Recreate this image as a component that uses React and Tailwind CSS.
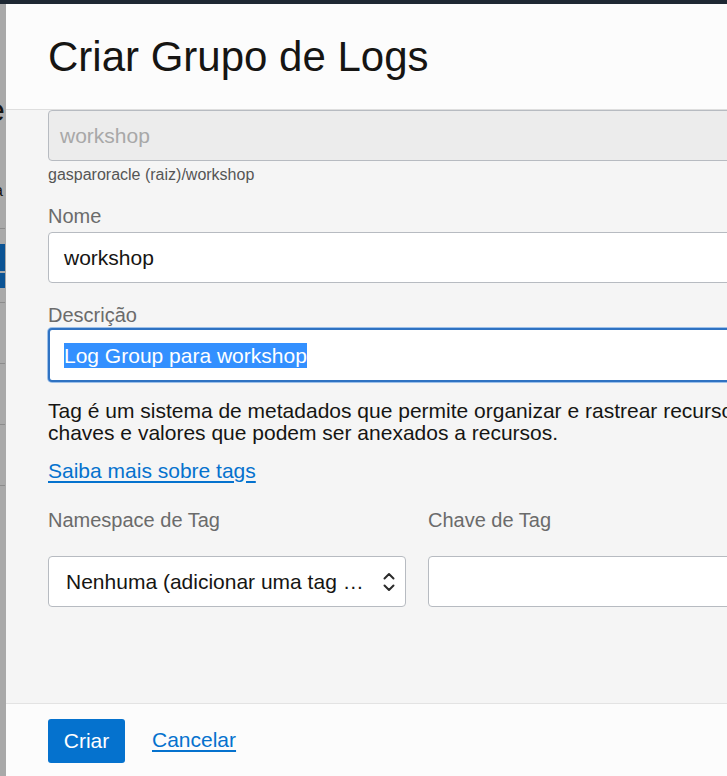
import React from 'react';

// fundo da página, escurecido pelo overlay do modal
function PageStrip() {
  return (
    <div className="w-[6px] shrink-0 bg-[#a9a9a9] overflow-hidden flex flex-col">
      <div className="h-[90px]" />
      <div className="h-[32px] -ml-[13px] text-[32px] leading-[32px] text-[#161513]">e</div>
      <div className="h-[56px]" />
      <div className="h-[18px] -ml-[6px] text-[16px] leading-[18px] text-[#161513]">a</div>
      <div className="h-[28px]" />
      <div className="h-px w-[5px] bg-[#8c8c8c]" />
      <div className="h-[15px]" />
      <div className="h-[27px] w-[5px] bg-[#0b5394]" />
      <div className="h-[2px]" />
      <div className="h-[15px] w-[5px] bg-[#0b5394]" />
      <div className="h-[14px]" />
      <div className="h-px w-[5px] bg-[#8c8c8c]" />
      <div className="h-[60px]" />
      <div className="h-px w-[5px] bg-[#8c8c8c]" />
      <div className="h-[60px]" />
      <div className="h-px w-[5px] bg-[#8c8c8c]" />
      <div className="h-[60px]" />
      <div className="h-px w-[5px] bg-[#8c8c8c]" />
    </div>
  );
}

function Chevrons() {
  return (
    <svg width="12" height="20" viewBox="0 0 12 20" fill="none" stroke="#2b2b2b" strokeWidth="2" strokeLinecap="round" strokeLinejoin="round">
      <path d="M1.5 6.5 L6 2 L10.5 6.5" />
      <path d="M1.5 13.5 L6 18 L10.5 13.5" />
    </svg>
  );
}

export default function App() {
  return (
    <div className="w-[727px] h-[776px] overflow-hidden flex flex-col font-['Liberation_Sans',Arial,sans-serif] text-[#161513]">
      <div className="h-[4px] bg-[#1e2833] shrink-0" />
      <div className="flex flex-1 min-h-0">
        <PageStrip />

        {/* --- MODAL --- */}
        <div className="flex-1 flex flex-col min-w-0 overflow-hidden">
          <div className="h-[106px] shrink-0 bg-[#fcfcfc] border-b border-[#dedede] flex items-center pl-[42px]">
            <h1 className="text-[42px] leading-none whitespace-nowrap">Criar Grupo de Logs</h1>
          </div>

          <div className="flex-1 bg-[#f5f5f5] pl-[42px] overflow-hidden">
            <div className="w-[720px] h-[51px] rounded-[4px] border border-[#b7bbc1] bg-[#ececec] flex items-center pl-[11px] text-[21px] text-[#a8a8a8]">
              workshop
            </div>
            <p className="mt-[4px] text-[16px] leading-[20px] text-[#555]">gasparoracle (raiz)/workshop</p>

            <label className="block mt-[19px] text-[20px] leading-[24px] text-[#6b6b6b]">Nome</label>
            <div className="mt-[4px] w-[720px] h-[51px] rounded-[4px] border border-[#b7bbc1] bg-white flex items-center pl-[15px] text-[21px]">
              workshop
            </div>

            <label className="block mt-[20px] text-[20px] leading-[24px] text-[#6b6b6b]">Descrição</label>
            <div className="mt-[1px] w-[720px] h-[54px] rounded-[4px] border-2 border-[#2f72c2] shadow-[0_0_0_1px_#9cc0ea] bg-white flex items-center pl-[14px] text-[21px]">
              <span className="bg-[#3390ff] text-white leading-[25px]">Log Group para workshop</span>
            </div>

            <p className="mt-[18px] text-[21px] leading-[22px] whitespace-nowrap">
              Tag é um sistema de metadados que permite organizar e rastrear recursos usando
              <br />
              chaves e valores que podem ser anexados a recursos.
            </p>
            <a href="#" className="block mt-[16px] text-[21px] leading-[22px] text-[#0572ce] underline underline-offset-[3px]">
              Saiba mais sobre tags
            </a>

            <div className="mt-[26px] flex gap-[22px]">
              <div className="w-[358px] shrink-0">
                <label className="block text-[20px] leading-[24px] text-[#6b6b6b]">Namespace de Tag</label>
                <div className="mt-[24px] h-[51px] rounded-[4px] border border-[#b7bbc1] bg-white flex items-center justify-between pl-[17px] pr-[10px] text-[21px]">
                  <span className="whitespace-nowrap">Nenhuma (adicionar uma tag …</span>
                  <Chevrons />
                </div>
              </div>
              <div className="w-[360px] shrink-0">
                <label className="block text-[20px] leading-[24px] text-[#6b6b6b]">Chave de Tag</label>
                <div className="mt-[24px] h-[51px] rounded-[4px] border border-[#b7bbc1] bg-white" />
              </div>
            </div>
          </div>

          {/* --- RODAPÉ --- */}
          <div className="h-[73px] shrink-0 bg-[#fcfcfc] border-t border-[#e3e3e3] pl-[42px] pt-[15px] flex items-start gap-[27px]">
            <button className="h-[44px] w-[77px] rounded-[3px] bg-[#0572ce] text-white text-[21px]">Criar</button>
            <a href="#" className="mt-[10px] text-[21px] leading-[22px] text-[#0572ce] underline underline-offset-[3px]">Cancelar</a>
          </div>
        </div>
      </div>
    </div>
  );
}
